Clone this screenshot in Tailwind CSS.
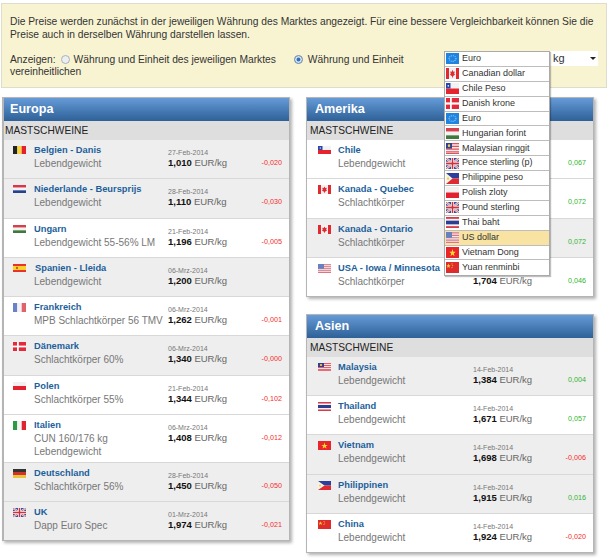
<!DOCTYPE html>
<html lang="de">
<head>
<meta charset="utf-8">
<title>Preise</title>
<script src="https://cdn.jsdelivr.net/npm/@tailwindcss/browser@4"></script>
</head>
<body class="bg-white font-['Liberation_Sans',Arial,sans-serif] w-[610px] h-[560px] overflow-hidden relative">
<svg class="hidden">
<symbol id="be" viewBox="0 0 13 9" preserveAspectRatio="none"><rect width="4.3" height="9" fill="#222"/><rect x="4.3" width="4.4" height="9" fill="#f5d63d"/><rect x="8.7" width="4.3" height="9" fill="#e3202c"/></symbol>
<symbol id="nl" viewBox="0 0 13 9" preserveAspectRatio="none"><rect width="13" height="3" fill="#d8364a"/><rect y="3" width="13" height="3" fill="#f4f4f6"/><rect y="6" width="13" height="3" fill="#27408f"/></symbol>
<symbol id="hu" viewBox="0 0 13 9" preserveAspectRatio="none"><rect width="13" height="3" fill="#d5404a"/><rect y="3" width="13" height="3" fill="#f2f2f2"/><rect y="6" width="13" height="3" fill="#3d7a3c"/></symbol>
<symbol id="es" viewBox="0 0 13 9" preserveAspectRatio="none"><rect width="13" height="9" fill="#e8302a"/><rect y="2.2" width="13" height="4.6" fill="#fbd02c"/><rect x="3" y="3.2" width="2" height="2.4" fill="#c8621e"/></symbol>
<symbol id="fr" viewBox="0 0 13 9" preserveAspectRatio="none"><rect width="4.3" height="9" fill="#6a80c8"/><rect x="4.3" width="4.4" height="9" fill="#f2f2f6"/><rect x="8.7" width="4.3" height="9" fill="#e2626a"/></symbol>
<symbol id="dk" viewBox="0 0 13 9" preserveAspectRatio="none"><rect width="13" height="9" fill="#e3293a"/><rect x="4" width="1.8" height="9" fill="#fff"/><rect y="3.6" width="13" height="1.8" fill="#fff"/></symbol>
<symbol id="pl" viewBox="0 0 13 9" preserveAspectRatio="none"><rect width="13" height="4.5" fill="#f4f0f0"/><rect y="4.5" width="13" height="4.5" fill="#e3202e"/></symbol>
<symbol id="it" viewBox="0 0 13 9" preserveAspectRatio="none"><rect width="4.3" height="9" fill="#2c9a45"/><rect x="4.3" width="4.4" height="9" fill="#f4f4f4"/><rect x="8.7" width="4.3" height="9" fill="#e0242f"/></symbol>
<symbol id="de" viewBox="0 0 13 9" preserveAspectRatio="none"><rect width="13" height="3" fill="#333"/><rect y="3" width="13" height="3" fill="#d2322d"/><rect y="6" width="13" height="3" fill="#e9c53a"/></symbol>
<symbol id="uk" viewBox="0 0 13 9" preserveAspectRatio="none"><rect width="13" height="9" fill="#3a4f96"/><path d="M0 0L13 9M13 0L0 9" stroke="#eee" stroke-width="2"/><path d="M0 0L13 9M13 0L0 9" stroke="#d3404e" stroke-width=".7"/><rect x="5" width="3" height="9" fill="#eee"/><rect y="3" width="13" height="3" fill="#eee"/><rect x="5.8" width="1.4" height="9" fill="#d3303e"/><rect y="3.8" width="13" height="1.4" fill="#d3303e"/></symbol>
<symbol id="cl" viewBox="0 0 13 9" preserveAspectRatio="none"><rect width="13" height="4.5" fill="#f3f3f3"/><rect y="4.5" width="13" height="4.5" fill="#e4252f"/><rect width="4.5" height="4.5" fill="#2a46a8"/><rect x="1.7" y="1.7" width="1.2" height="1.2" fill="#fff"/></symbol>
<symbol id="ca" viewBox="0 0 13 9" preserveAspectRatio="none"><rect width="13" height="9" fill="#f6f0f0"/><rect width="3" height="9" fill="#e02a30"/><rect x="10" width="3" height="9" fill="#e02a30"/><path d="M6.5 1.5L7.3 3L8.8 2.8L8.2 5L9.2 5.4L7 6.8L6.7 8H6.3L6 6.8L3.8 5.4L4.8 5L4.2 2.8L5.7 3Z" fill="#e02a30"/></symbol>
<symbol id="us" viewBox="0 0 13 9" preserveAspectRatio="none"><rect width="13" height="9" fill="#eee"/><path d="M0 .7H13M0 2.7H13M0 4.7H13M0 6.7H13M0 8.5H13" stroke="#dd7580" stroke-width="1"/><rect width="6" height="4.8" fill="#6a7fc0"/></symbol>
<symbol id="my" viewBox="0 0 13 9" preserveAspectRatio="none"><rect width="13" height="9" fill="#f3eeee"/><path d="M0 .6H13M0 2.8H13M0 5H13M0 7.2H13M0 8.6H13" stroke="#e2505a" stroke-width="1"/><rect width="6" height="4.6" fill="#2f3f95"/><circle cx="3" cy="2.3" r="1.2" fill="#f4d03c"/></symbol>
<symbol id="th" viewBox="0 0 13 9" preserveAspectRatio="none"><rect width="13" height="9" fill="#d93a48"/><rect y="1.5" width="13" height="6" fill="#f3f3f3"/><rect y="3" width="13" height="3" fill="#2c3e92"/></symbol>
<symbol id="vn" viewBox="0 0 13 9" preserveAspectRatio="none"><rect width="13" height="9" fill="#e8252b"/><path d="M6.5 1.6L7.3 3.9H9.7L7.8 5.3L8.5 7.6L6.5 6.2L4.5 7.6L5.2 5.3L3.3 3.9H5.7Z" fill="#fbdc2c"/></symbol>
<symbol id="ph" viewBox="0 0 13 9" preserveAspectRatio="none"><rect width="13" height="4.5" fill="#2c3f9c"/><rect y="4.5" width="13" height="4.5" fill="#de2a32"/><path d="M0 0L6.5 4.5L0 9Z" fill="#f6f3e8"/><circle cx="2" cy="4.5" r="1" fill="#f2d030"/></symbol>
<symbol id="cn" viewBox="0 0 13 9" preserveAspectRatio="none"><rect width="13" height="9" fill="#de2b2b"/><path d="M2.5 1.2L3.1 2.7H4.6L3.4 3.6L3.8 5L2.5 4.1L1.2 5L1.6 3.6L.4 2.7H1.9Z" fill="#f3d030"/><circle cx="6" cy="1.6" r=".5" fill="#f3d030"/><circle cx="6.7" cy="3" r=".5" fill="#f3d030"/><circle cx="6" cy="4.6" r=".5" fill="#f3d030"/></symbol>
<symbol id="eu" viewBox="0 0 13 13" preserveAspectRatio="none"><rect width="13" height="13" fill="#1f84e0"/><circle cx="6.5" cy="6.5" r="3.4" fill="none" stroke="#8cc6f5" stroke-width="1.2" stroke-dasharray="1.1 .9"/></symbol>
</svg>

<div class="absolute left-px top-[3px] w-[606px] h-[85px] bg-[#f8f4d2] border border-[#dedccb] pl-[8px] pt-[11px] text-[10.25px] leading-[13px] text-[#333]">
  <p class="whitespace-nowrap">Die Preise werden zunächst in der jeweiligen Währung des Marktes angezeigt. Für eine bessere Vergleichbarkeit können Sie die</p>
  <p>Preise auch in derselben Währung darstellen lassen.</p>
  <div class="mt-[12px] flex items-center h-[13px] whitespace-nowrap">
    <span>Anzeigen:</span>
    <span class="ml-[5px] w-[9px] h-[9px] rounded-full border border-[#a9b0b8] bg-[#eceff2]"></span>
    <span class="ml-[4px]">Währung und Einheit des jeweiligen Marktes</span>
    <span class="ml-[18px] w-[9px] h-[9px] rounded-full border border-[#8a9bb0] bg-[#2a72c0] shadow-[inset_0_0_0_1.5px_#dfe6ee]"></span>
    <span class="ml-[5px]">Währung und Einheit</span>
  </div>
  <p class="-mt-px">vereinheitlichen</p>
</div>

<main class="absolute left-[2px] top-[97px] flex gap-[16px] items-start">
  <section class="w-[288px] border border-[#b5b5b5] border-l-2 bg-white shadow-[2px_2px_3px_rgba(0,0,0,.3)]">
    <h2 class="h-[23px] bg-gradient-to-b from-[#659bd8] to-[#2e6197] text-white font-bold text-[12.6px] leading-[23px] pl-[6px]">Europa</h2>
    <h3 class="h-[19px] bg-[#dedede] text-[10.2px] leading-[19px] pl-[1px] text-[#222]">MASTSCHWEINE</h3>

    <div class="flex h-[39.3px] bg-[#eee] border-b border-[#d8d8d8]">
      <svg class="w-[13px] h-[8px] ml-[9px] mt-[6px]"><use href="#be"/></svg>
      <div class="ml-[8px] w-[134px] pt-[4px] text-[10px] leading-[13px] whitespace-nowrap"><div class="font-bold text-[9.3px] text-[#1d5f9b]">Belgien - Danis</div><div class="text-[#777]">Lebendgewicht</div></div>
      <div class="w-[60px] pt-[8px] whitespace-nowrap"><div class="text-[7px] leading-[9px] text-[#777]">27-Feb-2014</div><div class="text-[9.5px] leading-[12px] text-[#666]"><b class="text-[#111]">1,010</b> EUR/kg</div></div>
      <div class="flex-1 text-right pr-[7px] pt-[18px] text-[7.2px] leading-[9px] text-[#f52c2c]">-0,020</div>
    </div>
    <div class="flex h-[39.3px] bg-[#eee] border-b border-[#d8d8d8]">
      <svg class="w-[13px] h-[8px] ml-[9px] mt-[6px]"><use href="#nl"/></svg>
      <div class="ml-[8px] w-[134px] pt-[4px] text-[10px] leading-[13px] whitespace-nowrap"><div class="font-bold text-[9.3px] text-[#1d5f9b]">Niederlande - Beursprijs</div><div class="text-[#777]">Lebendgewicht</div></div>
      <div class="w-[60px] pt-[8px] whitespace-nowrap"><div class="text-[7px] leading-[9px] text-[#777]">28-Feb-2014</div><div class="text-[9.5px] leading-[12px] text-[#666]"><b class="text-[#111]">1,110</b> EUR/kg</div></div>
      <div class="flex-1 text-right pr-[7px] pt-[18px] text-[7.2px] leading-[9px] text-[#f52c2c]">-0,030</div>
    </div>
    <div class="flex h-[39.3px] bg-white border-b border-[#d8d8d8]">
      <svg class="w-[13px] h-[8px] ml-[9px] mt-[6px]"><use href="#hu"/></svg>
      <div class="ml-[8px] w-[134px] pt-[4px] text-[10px] leading-[13px] whitespace-nowrap"><div class="font-bold text-[9.3px] text-[#1d5f9b]">Ungarn</div><div class="text-[#777]">Lebendgewicht 55-56% LM</div></div>
      <div class="w-[60px] pt-[8px] whitespace-nowrap"><div class="text-[7px] leading-[9px] text-[#777]">21-Feb-2014</div><div class="text-[9.5px] leading-[12px] text-[#666]"><b class="text-[#111]">1,196</b> EUR/kg</div></div>
      <div class="flex-1 text-right pr-[7px] pt-[18px] text-[7.2px] leading-[9px] text-[#f52c2c]">-0,005</div>
    </div>
    <div class="flex h-[39.3px] bg-[#eee] border-b border-[#d8d8d8]">
      <svg class="w-[13px] h-[8px] ml-[9px] mt-[6px]"><use href="#es"/></svg>
      <div class="ml-[9px] w-[133px] pt-[4px] text-[10px] leading-[13px] whitespace-nowrap"><div class="font-bold text-[9.3px] text-[#1d5f9b]">Spanien - Lleida</div><div class="text-[#777] -ml-px">Lebendgewicht</div></div>
      <div class="w-[60px] pt-[8px] whitespace-nowrap"><div class="text-[7px] leading-[9px] text-[#777]">06-Mrz-2014</div><div class="text-[9.5px] leading-[12px] text-[#666]"><b class="text-[#111]">1,200</b> EUR/kg</div></div>
      <div class="flex-1"></div>
    </div>
    <div class="flex h-[39.3px] bg-white border-b border-[#d8d8d8]">
      <svg class="w-[13px] h-[9px] ml-[9px] mt-[6px]"><use href="#fr"/></svg>
      <div class="ml-[8px] w-[134px] pt-[4px] text-[10px] leading-[13px] whitespace-nowrap"><div class="font-bold text-[9.3px] text-[#1d5f9b]">Frankreich</div><div class="text-[#777]">MPB Schlachtkörper 56 TMV</div></div>
      <div class="w-[60px] pt-[8px] whitespace-nowrap"><div class="text-[7px] leading-[9px] text-[#777]">06-Mrz-2014</div><div class="text-[9.5px] leading-[12px] text-[#666]"><b class="text-[#111]">1,262</b> EUR/kg</div></div>
      <div class="flex-1 text-right pr-[7px] pt-[18px] text-[7.2px] leading-[9px] text-[#f52c2c]">-0,001</div>
    </div>
    <div class="flex h-[39.3px] bg-[#eee] border-b border-[#d8d8d8]">
      <svg class="w-[13px] h-[9px] ml-[9px] mt-[6px]"><use href="#dk"/></svg>
      <div class="ml-[8px] w-[134px] pt-[4px] text-[10px] leading-[13px] whitespace-nowrap"><div class="font-bold text-[9.3px] text-[#1d5f9b]">Dänemark</div><div class="text-[#777]">Schlachtkörper 60%</div></div>
      <div class="w-[60px] pt-[8px] whitespace-nowrap"><div class="text-[7px] leading-[9px] text-[#777]">06-Mrz-2014</div><div class="text-[9.5px] leading-[12px] text-[#666]"><b class="text-[#111]">1,340</b> EUR/kg</div></div>
      <div class="flex-1 text-right pr-[7px] pt-[18px] text-[7.2px] leading-[9px] text-[#f52c2c]">-0,000</div>
    </div>
    <div class="flex h-[39.3px] bg-white border-b border-[#d8d8d8]">
      <svg class="w-[13px] h-[8px] ml-[9px] mt-[6px]"><use href="#pl"/></svg>
      <div class="ml-[8px] w-[134px] pt-[4px] text-[10px] leading-[13px] whitespace-nowrap"><div class="font-bold text-[9.3px] text-[#1d5f9b]">Polen</div><div class="text-[#777]">Schlachtkörper 55%</div></div>
      <div class="w-[60px] pt-[8px] whitespace-nowrap"><div class="text-[7px] leading-[9px] text-[#777]">21-Feb-2014</div><div class="text-[9.5px] leading-[12px] text-[#666]"><b class="text-[#111]">1,344</b> EUR/kg</div></div>
      <div class="flex-1 text-right pr-[7px] pt-[18px] text-[7.2px] leading-[9px] text-[#f52c2c]">-0,102</div>
    </div>
    <div class="flex h-[48px] bg-white border-b border-[#d8d8d8]">
      <svg class="w-[13px] h-[9px] ml-[9px] mt-[6px]"><use href="#it"/></svg>
      <div class="ml-[8px] w-[134px] pt-[4px] text-[10px] leading-[13px] whitespace-nowrap"><div class="font-bold text-[9.3px] text-[#1d5f9b]">Italien</div><div class="text-[#777]">CUN 160/176 kg</div><div class="text-[#777]">Lebendgewicht</div></div>
      <div class="w-[60px] pt-[8px] whitespace-nowrap"><div class="text-[7px] leading-[9px] text-[#777]">06-Mrz-2014</div><div class="text-[9.5px] leading-[12px] text-[#666]"><b class="text-[#111]">1,408</b> EUR/kg</div></div>
      <div class="flex-1 text-right pr-[7px] pt-[18px] text-[7.2px] leading-[9px] text-[#f52c2c]">-0,012</div>
    </div>
    <div class="flex h-[39.3px] bg-[#eee] border-b border-[#d8d8d8]">
      <svg class="w-[13px] h-[9px] ml-[9px] mt-[6px]"><use href="#de"/></svg>
      <div class="ml-[8px] w-[134px] pt-[4px] text-[10px] leading-[13px] whitespace-nowrap"><div class="font-bold text-[9.3px] text-[#1d5f9b]">Deutschland</div><div class="text-[#777]">Schlachtkörper 56%</div></div>
      <div class="w-[60px] pt-[8px] whitespace-nowrap"><div class="text-[7px] leading-[9px] text-[#777]">28-Feb-2014</div><div class="text-[9.5px] leading-[12px] text-[#666]"><b class="text-[#111]">1,450</b> EUR/kg</div></div>
      <div class="flex-1 text-right pr-[7px] pt-[18px] text-[7.2px] leading-[9px] text-[#f52c2c]">-0,050</div>
    </div>
    <div class="flex h-[38px] bg-[#eee]">
      <svg class="w-[13px] h-[9px] ml-[9px] mt-[6px]"><use href="#uk"/></svg>
      <div class="ml-[8px] w-[134px] pt-[4px] text-[10px] leading-[13px] whitespace-nowrap"><div class="font-bold text-[9.3px] text-[#1d5f9b]">UK</div><div class="text-[#777]">Dapp Euro Spec</div></div>
      <div class="w-[60px] pt-[8px] whitespace-nowrap"><div class="text-[7px] leading-[9px] text-[#777]">01-Mrz-2014</div><div class="text-[9.5px] leading-[12px] text-[#666]"><b class="text-[#111]">1,974</b> EUR/kg</div></div>
      <div class="flex-1 text-right pr-[7px] pt-[18px] text-[7.2px] leading-[9px] text-[#f52c2c]">-0,021</div>
    </div>
  </section>

  <div class="flex flex-col gap-[17px] w-[288px]">
    <section class="border border-[#b5b5b5] bg-white shadow-[2px_2px_3px_rgba(0,0,0,.3)]">
      <h2 class="h-[23px] bg-gradient-to-b from-[#659bd8] to-[#2e6197] text-white font-bold text-[12.6px] leading-[23px] pl-[8px]">Amerika</h2>
      <h3 class="h-[19px] bg-[#dedede] text-[10.2px] leading-[19px] pl-[3px] text-[#222]">MASTSCHWEINE</h3>
      <div class="flex h-[39.3px] bg-white border-b border-[#d8d8d8]">
        <svg class="w-[13px] h-[8px] ml-[11px] mt-[6px]"><use href="#cl"/></svg>
        <div class="ml-[7px] w-[195px] pt-[4px] text-[10px] leading-[13px] whitespace-nowrap"><div class="font-bold text-[9.3px] text-[#1d5f9b]">Chile</div><div class="text-[#777]">Lebendgewicht</div></div>
        <div class="flex-1 text-right pr-[7px] pt-[18px] text-[7.2px] leading-[9px] text-[#2fb52f]">0,067</div>
      </div>
      <div class="flex h-[39.3px] bg-white border-b border-[#d8d8d8]">
        <svg class="w-[13px] h-[9px] ml-[11px] mt-[6px]"><use href="#ca"/></svg>
        <div class="ml-[7px] w-[195px] pt-[4px] text-[10px] leading-[13px] whitespace-nowrap"><div class="font-bold text-[9.3px] text-[#1d5f9b]">Kanada - Quebec</div><div class="text-[#777]">Schlachtkörper</div></div>
        <div class="flex-1 text-right pr-[7px] pt-[18px] text-[7.2px] leading-[9px] text-[#2fb52f]">0,072</div>
      </div>
      <div class="flex h-[39.3px] bg-[#eee] border-b border-[#d8d8d8]">
        <svg class="w-[13px] h-[9px] ml-[11px] mt-[6px]"><use href="#ca"/></svg>
        <div class="ml-[7px] w-[195px] pt-[4px] text-[10px] leading-[13px] whitespace-nowrap"><div class="font-bold text-[9.3px] text-[#1d5f9b]">Kanada - Ontario</div><div class="text-[#777]">Schlachtkörper</div></div>
        <div class="flex-1 text-right pr-[7px] pt-[18px] text-[7.2px] leading-[9px] text-[#2fb52f]">0,072</div>
      </div>
      <div class="flex h-[38px] bg-white">
        <svg class="w-[13px] h-[9px] ml-[11px] mt-[6px]"><use href="#us"/></svg>
        <div class="ml-[7px] w-[135px] pt-[4px] text-[10px] leading-[13px] whitespace-nowrap"><div class="font-bold text-[9.3px] text-[#1d5f9b]">USA - Iowa / Minnesota</div><div class="text-[#777]">Schlachtkörper</div></div>
        <div class="w-[60px] pt-[17px] whitespace-nowrap"><div class="text-[9.5px] leading-[12px] text-[#666]"><b class="text-[#111]">1,704</b> EUR/kg</div></div>
        <div class="flex-1 text-right pr-[7px] pt-[18px] text-[7.2px] leading-[9px] text-[#2fb52f]">0,046</div>
      </div>
    </section>

    <section class="border border-[#b5b5b5] bg-white shadow-[2px_2px_3px_rgba(0,0,0,.3)]">
      <h2 class="h-[23px] bg-gradient-to-b from-[#659bd8] to-[#2e6197] text-white font-bold text-[12.6px] leading-[23px] pl-[8px]">Asien</h2>
      <h3 class="h-[19px] bg-[#dedede] text-[10.2px] leading-[19px] pl-[3px] text-[#222]">MASTSCHWEINE</h3>
      <div class="flex h-[39.3px] bg-[#eee] border-b border-[#d8d8d8]">
        <svg class="w-[13px] h-[8px] ml-[11px] mt-[6px]"><use href="#my"/></svg>
        <div class="ml-[7px] w-[135px] pt-[4px] text-[10px] leading-[13px] whitespace-nowrap"><div class="font-bold text-[9.3px] text-[#1d5f9b]">Malaysia</div><div class="text-[#777]">Lebendgewicht</div></div>
        <div class="w-[60px] pt-[8px] whitespace-nowrap"><div class="text-[7px] leading-[9px] text-[#777]">14-Feb-2014</div><div class="text-[9.5px] leading-[12px] text-[#666]"><b class="text-[#111]">1,384</b> EUR/kg</div></div>
        <div class="flex-1 text-right pr-[7px] pt-[18px] text-[7.2px] leading-[9px] text-[#2fb52f]">0,004</div>
      </div>
      <div class="flex h-[39.3px] bg-white border-b border-[#d8d8d8]">
        <svg class="w-[13px] h-[9px] ml-[11px] mt-[6px]"><use href="#th"/></svg>
        <div class="ml-[7px] w-[135px] pt-[4px] text-[10px] leading-[13px] whitespace-nowrap"><div class="font-bold text-[9.3px] text-[#1d5f9b]">Thailand</div><div class="text-[#777]">Lebendgewicht</div></div>
        <div class="w-[60px] pt-[8px] whitespace-nowrap"><div class="text-[7px] leading-[9px] text-[#777]">14-Feb-2014</div><div class="text-[9.5px] leading-[12px] text-[#666]"><b class="text-[#111]">1,671</b> EUR/kg</div></div>
        <div class="flex-1 text-right pr-[7px] pt-[18px] text-[7.2px] leading-[9px] text-[#2fb52f]">0,057</div>
      </div>
      <div class="flex h-[39.3px] bg-[#eee] border-b border-[#d8d8d8]">
        <svg class="w-[13px] h-[9px] ml-[11px] mt-[6px]"><use href="#vn"/></svg>
        <div class="ml-[7px] w-[135px] pt-[4px] text-[10px] leading-[13px] whitespace-nowrap"><div class="font-bold text-[9.3px] text-[#1d5f9b]">Vietnam</div><div class="text-[#777]">Lebendgewicht</div></div>
        <div class="w-[60px] pt-[8px] whitespace-nowrap"><div class="text-[7px] leading-[9px] text-[#777]">14-Feb-2014</div><div class="text-[9.5px] leading-[12px] text-[#666]"><b class="text-[#111]">1,698</b> EUR/kg</div></div>
        <div class="flex-1 text-right pr-[7px] pt-[18px] text-[7.2px] leading-[9px] text-[#f52c2c]">-0,006</div>
      </div>
      <div class="flex h-[39.3px] bg-[#eee] border-b border-[#d8d8d8]">
        <svg class="w-[13px] h-[9px] ml-[11px] mt-[6px]"><use href="#ph"/></svg>
        <div class="ml-[7px] w-[135px] pt-[4px] text-[10px] leading-[13px] whitespace-nowrap"><div class="font-bold text-[9.3px] text-[#1d5f9b]">Philippinen</div><div class="text-[#777]">Lebendgewicht</div></div>
        <div class="w-[60px] pt-[8px] whitespace-nowrap"><div class="text-[7px] leading-[9px] text-[#777]">14-Feb-2014</div><div class="text-[9.5px] leading-[12px] text-[#666]"><b class="text-[#111]">1,915</b> EUR/kg</div></div>
        <div class="flex-1 text-right pr-[7px] pt-[18px] text-[7.2px] leading-[9px] text-[#2fb52f]">0,016</div>
      </div>
      <div class="flex h-[38px] bg-white">
        <svg class="w-[13px] h-[9px] ml-[11px] mt-[6px]"><use href="#cn"/></svg>
        <div class="ml-[7px] w-[135px] pt-[4px] text-[10px] leading-[13px] whitespace-nowrap"><div class="font-bold text-[9.3px] text-[#1d5f9b]">China</div><div class="text-[#777]">Lebendgewicht</div></div>
        <div class="w-[60px] pt-[8px] whitespace-nowrap"><div class="text-[7px] leading-[9px] text-[#777]">14-Feb-2014</div><div class="text-[9.5px] leading-[12px] text-[#666]"><b class="text-[#111]">1,924</b> EUR/kg</div></div>
        <div class="flex-1 text-right pr-[7px] pt-[18px] text-[7.2px] leading-[9px] text-[#f52c2c]">-0,020</div>
      </div>
    </section>
  </div>
</main>

<div class="absolute left-[550px] top-[51px] w-[48px] h-[15px] bg-white flex items-center justify-between pl-[3px] pr-[2px] text-[11px] text-[#333]">
  <span>kg</span><span class="w-0 h-0 border-x-[3px] border-x-transparent border-t-[3px] border-t-[#222]"></span>
</div>

<ul class="absolute left-[444px] top-[51px] w-[106px] border border-[#aaa] shadow-[1px_1px_1px_rgba(0,0,0,.25)] text-[9px] text-[#333] bg-white divide-y divide-[#bdbdbd]">
  <li class="h-[14.9px] flex items-center gap-[3px] pl-px"><svg class="w-[13px] h-[11px] shrink-0"><use href="#eu"/></svg>Euro</li>
  <li class="h-[14.9px] flex items-center gap-[3px] pl-px"><svg class="w-[13px] h-[11px] shrink-0"><use href="#ca"/></svg>Canadian dollar</li>
  <li class="h-[14.9px] flex items-center gap-[3px] pl-px"><svg class="w-[13px] h-[11px] shrink-0"><use href="#cl"/></svg>Chile Peso</li>
  <li class="h-[14.9px] flex items-center gap-[3px] pl-px"><svg class="w-[13px] h-[11px] shrink-0"><use href="#dk"/></svg>Danish krone</li>
  <li class="h-[14.9px] flex items-center gap-[3px] pl-px"><svg class="w-[13px] h-[11px] shrink-0"><use href="#eu"/></svg>Euro</li>
  <li class="h-[14.9px] flex items-center gap-[3px] pl-px"><svg class="w-[13px] h-[11px] shrink-0"><use href="#hu"/></svg>Hungarian forint</li>
  <li class="h-[14.9px] flex items-center gap-[3px] pl-px"><svg class="w-[13px] h-[11px] shrink-0"><use href="#my"/></svg>Malaysian ringgit</li>
  <li class="h-[14.9px] flex items-center gap-[3px] pl-px"><svg class="w-[13px] h-[11px] shrink-0"><use href="#uk"/></svg>Pence sterling (p)</li>
  <li class="h-[14.9px] flex items-center gap-[3px] pl-px"><svg class="w-[13px] h-[11px] shrink-0"><use href="#ph"/></svg>Philippine peso</li>
  <li class="h-[14.9px] flex items-center gap-[3px] pl-px"><svg class="w-[13px] h-[11px] shrink-0"><use href="#pl"/></svg>Polish zloty</li>
  <li class="h-[14.9px] flex items-center gap-[3px] pl-px"><svg class="w-[13px] h-[11px] shrink-0"><use href="#uk"/></svg>Pound sterling</li>
  <li class="h-[14.9px] flex items-center gap-[3px] pl-px"><svg class="w-[13px] h-[11px] shrink-0"><use href="#th"/></svg>Thai baht</li>
  <li class="h-[14.9px] flex items-center gap-[3px] pl-px bg-[#f8e3a2]"><svg class="w-[13px] h-[11px] shrink-0"><use href="#us"/></svg>US dollar</li>
  <li class="h-[14.9px] flex items-center gap-[3px] pl-px"><svg class="w-[13px] h-[11px] shrink-0"><use href="#vn"/></svg>Vietnam Dong</li>
  <li class="h-[14.9px] flex items-center gap-[3px] pl-px"><svg class="w-[13px] h-[11px] shrink-0"><use href="#cn"/></svg>Yuan renminbi</li>
</ul>
</body>
</html>
